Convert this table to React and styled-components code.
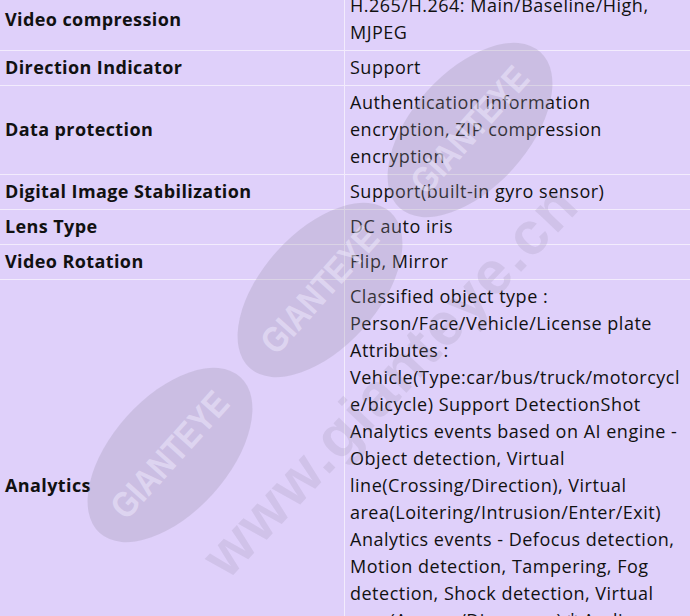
import React from 'react'
import styled, { createGlobalStyle } from 'styled-components'

const GlobalStyle = createGlobalStyle`
    html, body {
        margin: 0;
        padding: 0;
        background-color: #dfd0fa;
    }
`

const Pagina = styled.div`
    position: relative;
    width: 690px;
    height: 616px;
    overflow: hidden;
    background-color: #dfd0fa;
    font-family: "Open Sans", "Noto Sans", sans-serif;
    color: #111111;
`

const Tabela = styled.table`
    width: 690px;
    margin-top: -11px;
    border-collapse: collapse;
    table-layout: fixed;
`

const Linha = styled.tr`
    border-bottom: 1px solid #f3ecfd;
`

const Rotulo = styled.td`
    width: 334px;
    padding: 3px 5px 4px;
    border-right: 1px solid #f3ecfd;
    font-size: 18px;
    font-weight: bold;
    letter-spacing: 0.4px;
    line-height: 27px;
    vertical-align: middle;
`

const Valor = styled.td`
    padding: 3px 5px 4px;
    font-size: 18px;
    letter-spacing: 0.5px;
    line-height: 27px;
    vertical-align: middle;
    overflow-wrap: break-word;
`

const MarcaDagua = styled.div`
    position: absolute;
    inset: 0;
    pointer-events: none;
`

const Elipse = styled.div`
    position: absolute;
    left: ${props => props.x - 105}px;
    top: ${props => props.y - 58}px;
    width: 210px;
    height: 116px;
    border-radius: 50%;
    background-color: rgba(150, 145, 165, 0.27);
    transform: rotate(-48deg);
    display: flex;
    align-items: center;
    justify-content: center;
`

const TextoElipse = styled.span`
    font-family: "Liberation Sans", Arial, sans-serif;
    font-weight: bold;
    font-size: 36px;
    color: rgba(238, 232, 252, 0.55);
    transform: scaleX(0.85);
`

const Endereco = styled.div`
    position: absolute;
    left: 390px;
    top: 380px;
    transform: translate(-50%, -50%) rotate(-46.5deg);
    font-family: "Liberation Sans", Arial, sans-serif;
    font-weight: bold;
    font-size: 60px;
    letter-spacing: 2px;
    white-space: nowrap;
    color: rgba(150, 140, 165, 0.2);
`

const especificacoes = [
    ['Video compression', 'H.265/H.264: Main/Baseline/High, MJPEG'],
    ['Direction Indicator', 'Support'],
    ['Data protection', 'Authentication information encryption, ZIP compression encryption'],
    ['Digital Image Stabilization', 'Support(built-in gyro sensor)'],
    ['Lens Type', 'DC auto iris'],
    ['Video Rotation', 'Flip, Mirror'],
    ['Analytics', 'Classified object type : Person/Face/Vehicle/License plate Attributes : Vehicle(Type:car/bus/truck/motorcycle/bicycle) Support DetectionShot Analytics events based on AI engine - Object detection, Virtual line(Crossing/Direction), Virtual area(Loitering/Intrusion/Enter/Exit) Analytics events - Defocus detection, Motion detection, Tampering, Fog detection, Shock detection, Virtual area(Appear/Disappear) * Audio detection, Sound classification, Queue management'],
]

class App extends React.Component {
    render () {
        return (
            <Pagina>
                <GlobalStyle />
                <Tabela>
                    <tbody>
                        {especificacoes.map(([rotulo, valor]) => (
                            <Linha key={rotulo}>
                                <Rotulo>{rotulo}</Rotulo>
                                <Valor>{valor}</Valor>
                            </Linha>
                        ))}
                    </tbody>
                </Tabela>
                <MarcaDagua>
                    <Elipse x={470} y={130}><TextoElipse>GIANTEYE</TextoElipse></Elipse>
                    <Elipse x={320} y={290}><TextoElipse>GIANTEYE</TextoElipse></Elipse>
                    <Elipse x={170} y={455}><TextoElipse>GIANTEYE</TextoElipse></Elipse>
                    <Endereco>www.gianteye.cn</Endereco>
                </MarcaDagua>
            </Pagina>
        )
    }
}

export default App
